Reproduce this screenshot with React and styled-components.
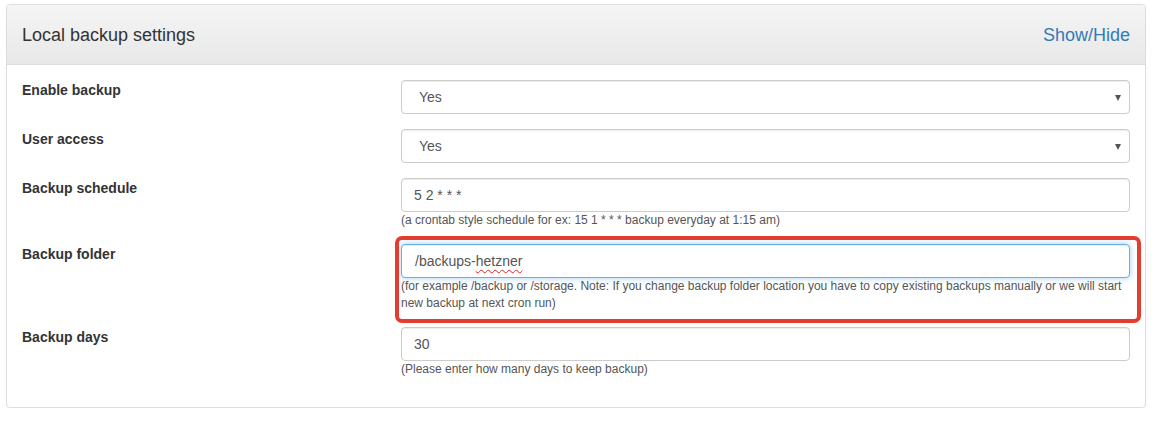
import React from "react";
import styled, { createGlobalStyle, css } from "styled-components";

const GlobalStyle = createGlobalStyle`
  html, body {
    margin: 0;
    padding: 0;
    background: #fff;
  }
  body {
    font-family: "Liberation Sans", Arial, sans-serif;
    font-size: 14px;
    line-height: 1.42857;
    color: #333;
  }
  * {
    box-sizing: border-box;
  }
`;

const Page = styled.div`
  padding: 4px 0 0 6px;
`;

const Panel = styled.section`
  width: 1140px;
  border: 1px solid #ddd;
  border-radius: 4px;
  background: #fff;
  box-shadow: 0 1px 2px rgba(0, 0, 0, 0.05);
`;

const PanelHeading = styled.header`
  display: flex;
  align-items: center;
  justify-content: space-between;
  height: 60px;
  padding: 0 15px;
  border-bottom: 1px solid #ddd;
  border-radius: 3px 3px 0 0;
  background-image: linear-gradient(to bottom, #f5f5f5 0, #e8e8e8 100%);
`;

const PanelTitle = styled.h3`
  margin: 0;
  font-size: 18px;
  font-weight: normal;
  line-height: 20px;
  color: #333;
`;

const ToggleLink = styled.a`
  font-size: 18px;
  line-height: 20px;
  color: #337ab7;
  text-decoration: none;
  cursor: pointer;
`;

const PanelBody = styled.div`
  padding: 15px 15px 14px;
`;

const FormGroup = styled.div`
  display: grid;
  grid-template-columns: 364px 1fr;
  column-gap: 15px;
  margin-bottom: 15px;
`;

const Label = styled.label`
  font-weight: bold;
  font-size: 14px;
  line-height: 20px;
  color: #333;
`;

const Field = styled.div`
  position: relative;
`;

const controlBase = css`
  display: block;
  width: 100%;
  height: 34px;
  padding: 6px 12px;
  font-family: "Liberation Sans", Arial, sans-serif;
  font-size: 14px;
  line-height: 20px;
  color: #555;
  background: #fff;
  border: 1px solid #ccc;
  border-radius: 4px;
  box-shadow: inset 0 1px 1px rgba(0, 0, 0, 0.075);
  outline: none;
`;

const TextInput = styled.input`
  ${controlBase}
`;

const FocusedInput = styled.div`
  ${controlBase}
  border-color: #66afe9;
  box-shadow: inset 0 1px 1px rgba(0, 0, 0, 0.075),
    0 0 6px rgba(102, 175, 233, 0.6);
  padding-left: 13px;
`;

const Misspelled = styled.span`
  text-decoration: underline wavy #e02020;
  text-decoration-thickness: 1px;
  text-underline-offset: 3px;
`;

const SelectWrap = styled.div`
  position: relative;

  &::after {
    content: "";
    position: absolute;
    right: 9px;
    top: 15px;
    border-left: 3.5px solid transparent;
    border-right: 3.5px solid transparent;
    border-top: 6px solid #555;
    pointer-events: none;
  }
`;

const Select = styled.select`
  ${controlBase}
  appearance: none;
  padding-left: 17px;
`;

const HelpBlock = styled.div`
  font-size: 12px;
  line-height: 17px;
  color: #555;
`;

const Highlight = styled.div`
  position: absolute;
  left: -6px;
  top: -8px;
  right: -11px;
  bottom: -11px;
  border: 4px solid #e33d30;
  border-radius: 7px;
  pointer-events: none;
`;

const fields = [
  { label: "Enable backup", type: "select", value: "Yes" },
  { label: "User access", type: "select", value: "Yes" },
  {
    label: "Backup schedule",
    type: "text",
    value: "5 2 * * *",
    help: "(a crontab style schedule for ex: 15 1 * * * backup everyday at 1:15 am)",
  },
  {
    label: "Backup folder",
    type: "focused",
    help: "(for example /backup or /storage. Note: If you change backup folder location you have to copy existing backups manually or we will start new backup at next cron run)",
    highlight: true,
  },
  {
    label: "Backup days",
    type: "text",
    value: "30",
    help: "(Please enter how many days to keep backup)",
  },
];

function Control({ field }) {
  if (field.type === "select") {
    return (
      <SelectWrap>
        <Select defaultValue={field.value}>
          <option>Yes</option>
          <option>No</option>
        </Select>
      </SelectWrap>
    );
  }
  if (field.type === "focused") {
    return (
      <FocusedInput>
        /backups-<Misspelled>hetzner</Misspelled>
      </FocusedInput>
    );
  }
  return <TextInput type="text" defaultValue={field.value} readOnly />;
}

export default function App() {
  return (
    <Page>
      <GlobalStyle />
      <Panel>
        <PanelHeading>
          <PanelTitle>Local backup settings</PanelTitle>
          <ToggleLink>Show/Hide</ToggleLink>
        </PanelHeading>
        <PanelBody>
          {fields.map((field) => (
            <FormGroup key={field.label}>
              <Label>{field.label}</Label>
              <Field>
                <Control field={field} />
                {field.help && <HelpBlock>{field.help}</HelpBlock>}
                {field.highlight && <Highlight />}
              </Field>
            </FormGroup>
          ))}
        </PanelBody>
      </Panel>
    </Page>
  );
}
